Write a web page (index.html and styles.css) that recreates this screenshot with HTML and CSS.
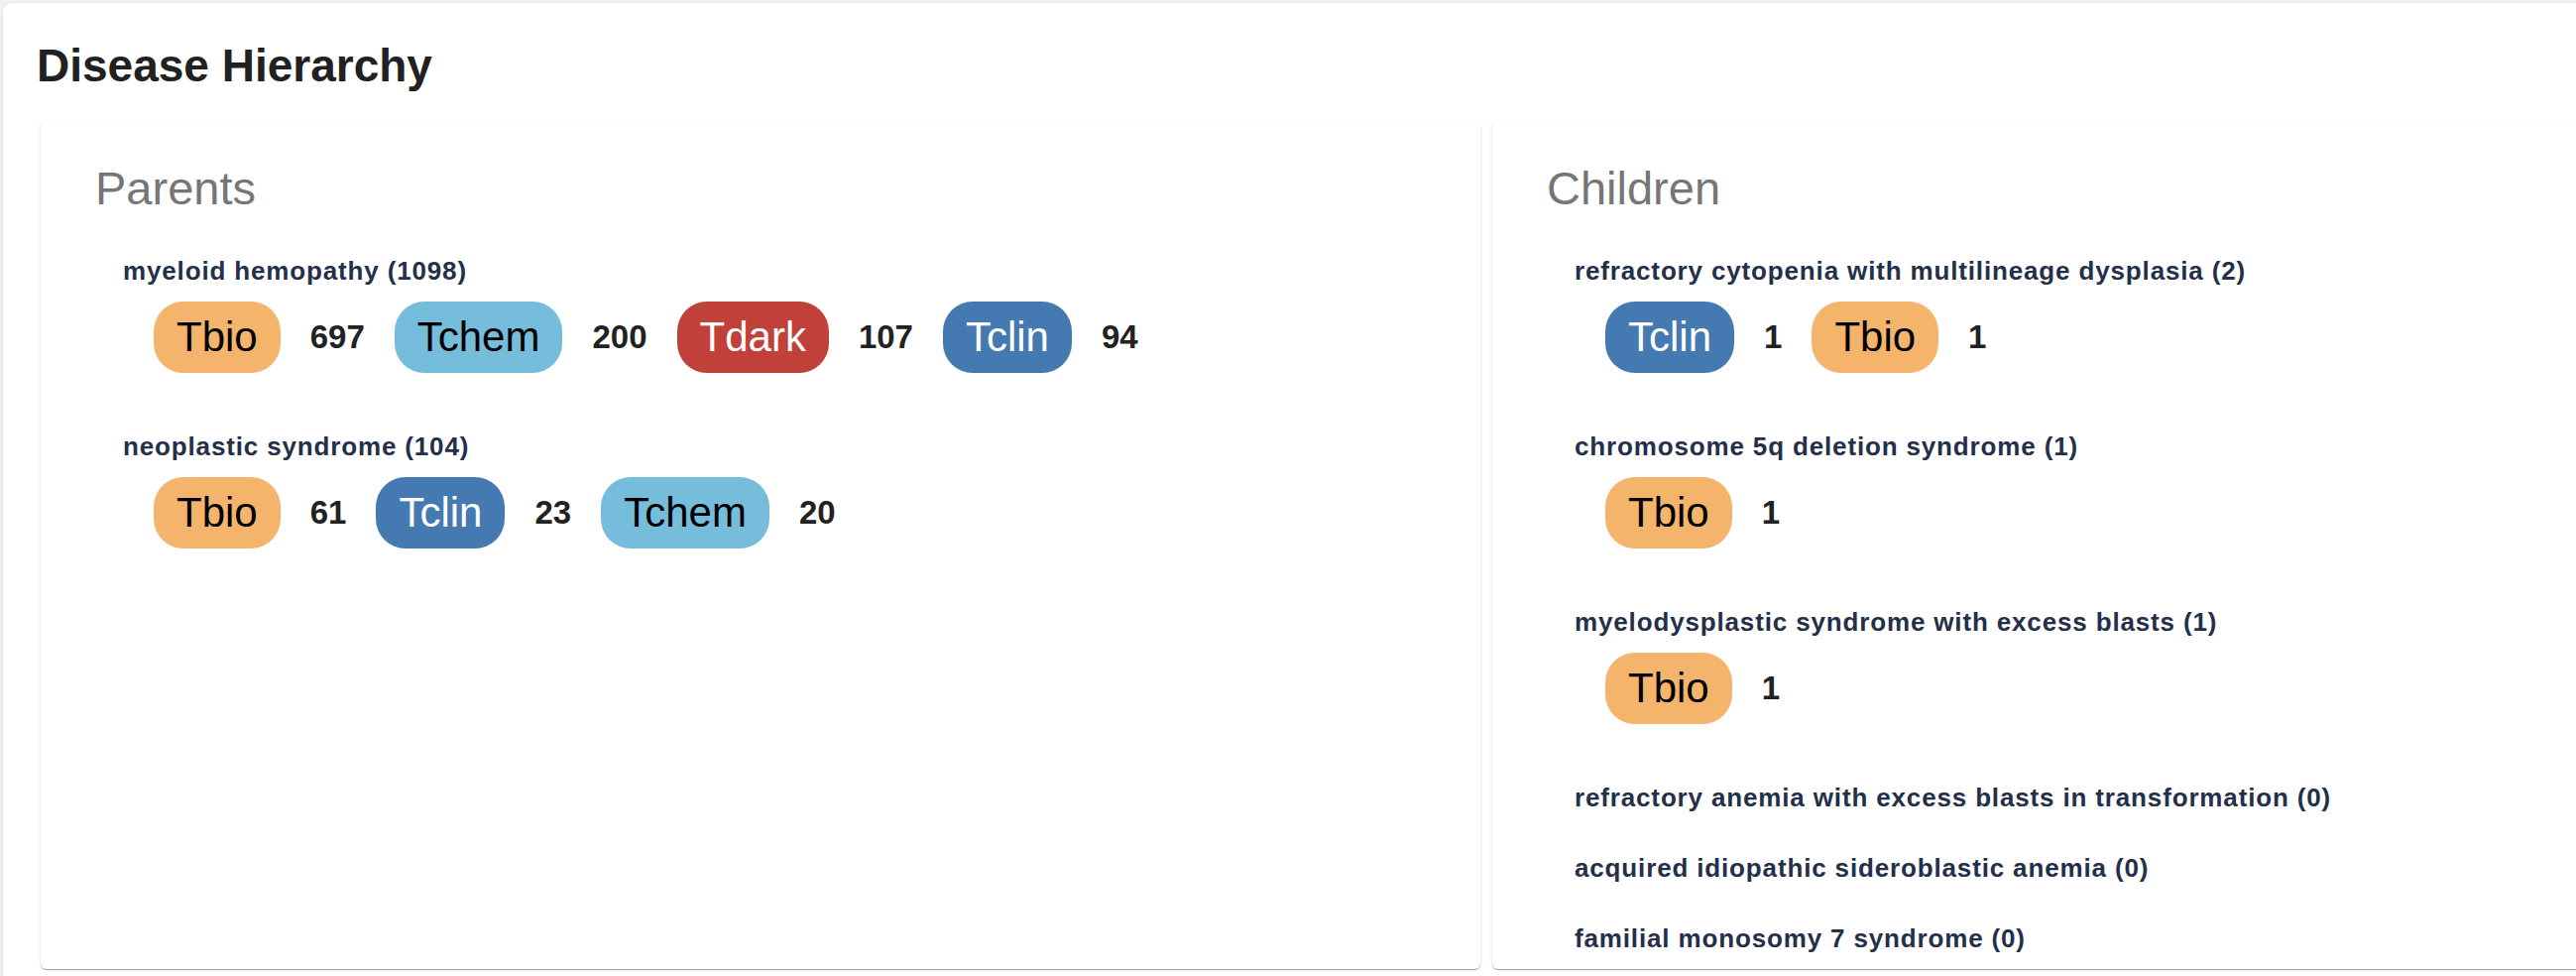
FILE: index.html
```html
<!DOCTYPE html>
<html lang="en">
<head>
<meta charset="utf-8">
<title>Disease Hierarchy</title>
<link rel="stylesheet" href="styles.css">
</head>
<body>
<section class="panel">
  <h2 class="panel-title">Disease Hierarchy</h2>
  <div class="columns">
    <div class="card">
      <h3 class="card-title">Parents</h3>
      <div class="group-list">
        <div class="group">
          <div class="group-name">myeloid hemopathy (1098)</div>
          <div class="tdl-row">
            <span class="tdl tbio">Tbio</span><span class="count">697</span>
            <span class="tdl tchem">Tchem</span><span class="count">200</span>
            <span class="tdl tdark">Tdark</span><span class="count">107</span>
            <span class="tdl tclin">Tclin</span><span class="count">94</span>
          </div>
        </div>
        <div class="group">
          <div class="group-name">neoplastic syndrome (104)</div>
          <div class="tdl-row">
            <span class="tdl tbio">Tbio</span><span class="count">61</span>
            <span class="tdl tclin">Tclin</span><span class="count">23</span>
            <span class="tdl tchem">Tchem</span><span class="count">20</span>
          </div>
        </div>
      </div>
    </div>
    <div class="card">
      <h3 class="card-title">Children</h3>
      <div class="group-list">
        <div class="group">
          <div class="group-name">refractory cytopenia with multilineage dysplasia (2)</div>
          <div class="tdl-row">
            <span class="tdl tclin">Tclin</span><span class="count">1</span>
            <span class="tdl tbio">Tbio</span><span class="count">1</span>
          </div>
        </div>
        <div class="group">
          <div class="group-name">chromosome 5q deletion syndrome (1)</div>
          <div class="tdl-row">
            <span class="tdl tbio">Tbio</span><span class="count">1</span>
          </div>
        </div>
        <div class="group">
          <div class="group-name">myelodysplastic syndrome with excess blasts (1)</div>
          <div class="tdl-row">
            <span class="tdl tbio">Tbio</span><span class="count">1</span>
          </div>
        </div>
        <div class="group">
          <div class="group-name">refractory anemia with excess blasts in transformation (0)</div>
        </div>
        <div class="group">
          <div class="group-name">acquired idiopathic sideroblastic anemia (0)</div>
        </div>
        <div class="group">
          <div class="group-name">familial monosomy 7 syndrome (0)</div>
        </div>
      </div>
    </div>
  </div>
</section>
</body>
</html>
```
FILE: styles.css
```css
html, body {
  margin: 0;
  overflow: hidden;
  background: #f1f1f1;
}

body {
  font-family: "Liberation Sans", Arial, Helvetica, sans-serif;
  padding: 3px 0 0 3px;
}

.panel {
  width: 3000px;
  min-height: 1000px;
  box-sizing: border-box;
  background: #fff;
  border-radius: 8px;
  box-shadow: 0 0 1px rgba(0, 0, 0, 0.18), 0 1px 3px rgba(0, 0, 0, 0.08);
  padding: 36px 0 0 34px;
}

.panel-title {
  margin: 0 0 28px;
  font-size: 46px;
  line-height: 54px;
  font-weight: 700;
  color: #212121;
}

.columns {
  display: grid;
  grid-template-columns: 1452px 1452px;
  gap: 12px;
  margin-left: 4px;
}

.card {
  background: #fff;
  border-radius: 6px;
  box-shadow: 0 2px 1px -1px rgba(0, 0, 0, 0.2), 0 1px 1px 0 rgba(0, 0, 0, 0.14), 0 1px 3px 0 rgba(0, 0, 0, 0.12);
  padding: 41px 0 16px 55px;
}

.card-title {
  margin: 0 0 40px;
  font-size: 47px;
  line-height: 56px;
  font-weight: 400;
  color: #767676;
}

.group-list {
  display: flex;
  flex-direction: column;
  gap: 41px;
  padding-left: 28px;
}

.group-name {
  font-size: 26px;
  line-height: 30px;
  font-weight: 700;
  letter-spacing: 0.85px;
  color: #24304a;
}

.tdl-row {
  display: flex;
  align-items: center;
  gap: 30px;
  margin: 16px 0 18px 31px;
  height: 72px;
}

.tdl {
  display: inline-flex;
  align-items: center;
  height: 72px;
  padding: 0 23px;
  border-radius: 30px;
  font-size: 42px;
  line-height: 1;
  color: #000;
}

.tbio { background: #f4b46b; }
.tchem { background: #76bddb; }
.tdark { background: #c1403a; color: #fff; }
.tclin { background: #4579b2; color: #fff; }

.count {
  font-size: 33px;
  font-weight: 700;
  color: #222;
}
```
